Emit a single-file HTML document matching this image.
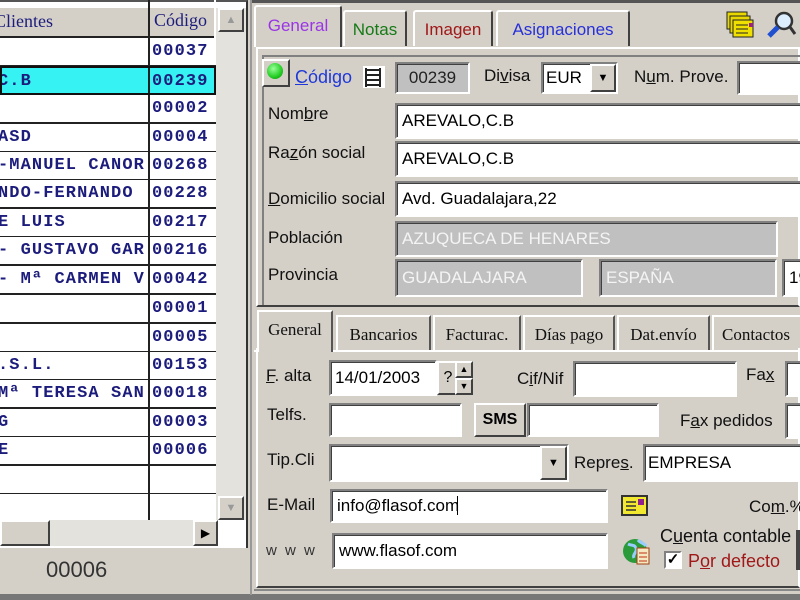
<!DOCTYPE html>
<html><head><meta charset="utf-8"><style>
*{margin:0;padding:0;box-sizing:border-box}
body{width:800px;height:600px;overflow:hidden;background:#d4d0c8;font-family:"Liberation Sans",sans-serif;position:relative}
.a{position:absolute}
.row{position:absolute;left:0;width:216px;height:29px;border-bottom:2px solid #222;background:#fff;font-family:"Liberation Mono",monospace;font-weight:bold;font-size:17px;letter-spacing:1.1px;color:#1c1c7c;white-space:nowrap;overflow:hidden}
.row .n{position:absolute;left:-2px;top:0;line-height:28px;width:148px;overflow:hidden}
.row .c{position:absolute;left:148px;width:68px;border-left:2px solid #222;padding-left:2px;height:29px;top:0;line-height:28px}
.in{position:absolute;background:#fff;border:2px solid;border-color:#808080 #fff #fff #808080;box-shadow:inset 1px 1px #404040;font-size:17px;padding-left:5px;color:#000;white-space:nowrap;overflow:hidden}
.gr{background:#c0c0c0;color:#f4f4f4}
.lb{position:absolute;font-size:17px;color:#111;white-space:nowrap}
.tab{position:absolute;border:2px solid;border-color:#fff #404040 transparent #fff;border-bottom:none;background:#d4d0c8;font-size:17px;text-align:center;border-radius:3px 3px 0 0}
.t2{position:absolute;top:315px;height:36px;border:2px solid;border-color:#fff #555 transparent #fff;border-bottom:none;font-family:"Liberation Serif",serif;font-size:17px;line-height:36px;text-align:center;color:#111}
.btn{position:absolute;background:#d4d0c8;border:2px solid;border-color:#fff #404040 #404040 #fff}
u{text-decoration:underline}
</style></head><body>
<div class="a" style="left:0;top:0;width:248px;height:548px;background:#fff;border-right:2px solid #333;border-top:2px solid #555"></div>
<div class="a" style="left:0;top:8px;width:216px;height:30px;background:#d4d0c8;border-bottom:2px solid #222;font-family:'Liberation Serif',serif;font-size:18px;color:#1c1c7c">
<span class="a" style="left:-6px;top:3px">Clientes</span>
<div class="a" style="left:148px;top:-8px;width:68px;height:38px;border-left:2px solid #222;border-right:2px solid #fff;padding:10px 0 0 4px">Código</div></div>
<div class="row" style="top:38px"><span class="n"></span><span class="c">00037</span></div>
<div class="row" style="top:66px;background:#36f2f2;border:2px solid #111"><span class="n" style="left:-4px">C.B</span><span class="c" style="background:#36f2f2;left:146px">00239</span></div>
<div class="row" style="top:95px"><span class="n"></span><span class="c">00002</span></div>
<div class="row" style="top:124px"><span class="n">ASD</span><span class="c">00004</span></div>
<div class="row" style="top:152px"><span class="n">-MANUEL CANOR</span><span class="c">00268</span></div>
<div class="row" style="top:180px"><span class="n">NDO-FERNANDO</span><span class="c">00228</span></div>
<div class="row" style="top:209px"><span class="n">E LUIS</span><span class="c">00217</span></div>
<div class="row" style="top:237px"><span class="n">- GUSTAVO GAR</span><span class="c">00216</span></div>
<div class="row" style="top:266px"><span class="n"> - Mª CARMEN V</span><span class="c">00042</span></div>
<div class="row" style="top:295px"><span class="n"></span><span class="c">00001</span></div>
<div class="row" style="top:324px"><span class="n"></span><span class="c">00005</span></div>
<div class="row" style="top:352px"><span class="n">.S.L.</span><span class="c">00153</span></div>
<div class="row" style="top:380px"><span class="n">Mª TERESA SAN</span><span class="c">00018</span></div>
<div class="row" style="top:409px"><span class="n">G</span><span class="c">00003</span></div>
<div class="row" style="top:437px"><span class="n">E</span><span class="c">00006</span></div>
<div class="row" style="top:466px"><span class="n"></span><span class="c"></span></div>
<div class="row" style="top:494px;height:26px;border-bottom:none"><span class="n"></span><span class="c"></span></div>
<div class="a" style="left:216px;top:8px;width:30px;height:512px;background:#e4e2dc"></div>
<div class="btn" style="left:218px;top:8px;width:26px;height:24px;color:#999;font-size:11px;text-align:center;line-height:20px">▲</div>
<div class="btn" style="left:218px;top:496px;width:26px;height:24px;color:#999;font-size:11px;text-align:center;line-height:20px">▼</div>
<div class="a" style="left:0;top:520px;width:218px;height:26px;background:#e4e2dc"></div>
<div class="btn" style="left:0;top:520px;width:50px;height:26px"></div>
<div class="btn" style="left:193px;top:520px;width:25px;height:26px;font-size:12px;text-align:center;line-height:22px">▶</div>
<div class="a" style="left:46px;top:557px;font-size:22px;color:#333">00006</div>
<div class="a" style="left:0;top:594px;width:800px;height:6px;background:#777"></div>
<div class="a" style="left:250px;top:0;width:2px;height:595px;background:#999"></div>

<div class="a" style="left:252px;top:0;width:548px;height:3px;background:#555"></div>
<div class="tab" style="left:254px;top:5px;width:88px;height:42px;line-height:38px;color:#9a34e6;z-index:2">General</div>
<div class="tab" style="left:343px;top:10px;width:64px;height:36px;line-height:36px;color:#167a16">Notas</div>
<div class="tab" style="left:413px;top:10px;width:80px;height:36px;line-height:36px;color:#a01818">Imagen</div>
<div class="tab" style="left:496px;top:10px;width:134px;height:36px;line-height:36px;color:#2830d8">Asignaciones</div>
<svg class="a" style="left:725px;top:10px" width="30" height="30"><rect x="2" y="2" width="20" height="17" fill="#e8d800" stroke="#222"/><rect x="5" y="6" width="20" height="17" fill="#e8d800" stroke="#222"/><rect x="8" y="10" width="20" height="17" fill="#f0e000" stroke="#222"/><path d="M11 15h12M11 19h12M11 23h12" stroke="#222"/><rect x="24" y="13" width="4" height="4" fill="#a02080"/></svg>
<svg class="a" style="left:765px;top:8px" width="32" height="32"><circle cx="19" cy="13" r="8" fill="#ddeeff" stroke="#333" stroke-width="2.5"/><path d="M13 19L4 28" stroke="#2050d0" stroke-width="5"/><path d="M25 19l5 7" stroke="#333" stroke-width="3"/></svg>
<div class="a" style="left:256px;top:47px;width:544px;height:260px;border:2px solid;border-color:#fff #fff #404040 #fff"></div>
<div class="a" style="left:262px;top:55px;width:540px;height:250px;border-left:2px solid #808080;border-top:2px solid #808080"></div>

<div class="btn" style="left:262px;top:59px;width:28px;height:28px"><div class="a" style="left:3px;top:2px;width:16px;height:16px;border-radius:50%;background:radial-gradient(circle at 40% 35%,#9f9,#2c2 60%,#080)"></div></div>
<div class="lb" style="left:295px;top:67px;color:#2038d8;font-size:18px"><u>C</u>ódigo</div>
<svg class="a" style="left:361px;top:64px" width="26" height="26"><rect x="2" y="2" width="22" height="22" fill="#fff"/><path d="M4 6h16M4 11h16M4 16h16M4 21h16M5 4v19M19 4v19" stroke="#222" stroke-width="2" fill="none"/></svg>
<div class="in gr" style="left:395px;top:62px;width:75px;height:32px;color:#222;line-height:28px;text-align:center;padding:0">00239</div>
<div class="lb" style="left:484px;top:66px">Di<u>v</u>isa</div>
<div class="in" style="left:541px;top:62px;width:77px;height:32px;line-height:28px;padding-left:3px">EUR</div>
<div class="btn" style="left:590px;top:64px;width:26px;height:28px;font-size:11px;text-align:center;line-height:24px">▼</div>
<div class="lb" style="left:634px;top:67px">N<u>u</u>m. Prove.</div>
<div class="in" style="left:737px;top:61px;width:70px;height:34px"></div>

<div class="lb" style="left:268px;top:104px">Nom<u>b</u>re</div>
<div class="in" style="left:395px;top:103px;width:410px;height:36px;line-height:32px">AREVALO,C.B</div>
<div class="lb" style="left:268px;top:143px">Ra<u>z</u>ón social</div>
<div class="in" style="left:395px;top:141px;width:410px;height:36px;line-height:32px">AREVALO,C.B</div>
<div class="lb" style="left:268px;top:189px"><u>D</u>omicilio social</div>
<div class="in" style="left:395px;top:181px;width:410px;height:36px;line-height:32px">Avd. Guadalajara,22</div>
<div class="lb" style="left:268px;top:228px">Población</div>
<div class="in gr" style="left:395px;top:221px;width:383px;height:36px;line-height:32px">AZUQUECA DE HENARES</div>
<div class="lb" style="left:268px;top:265px">Provincia</div>
<div class="in gr" style="left:395px;top:259px;width:188px;height:38px;line-height:34px">GUADALAJARA</div>
<div class="in gr" style="left:599px;top:259px;width:178px;height:38px;line-height:34px">ESPAÑA</div>
<div class="in" style="left:782px;top:259px;width:30px;height:38px;line-height:34px">19</div>

<div class="a" style="left:256px;top:348px;width:544px;height:240px;border:2px solid;border-color:#fff #fff #404040 #fff;border-top:none"></div>
<div class="a" style="left:254px;top:589px;width:546px;height:2px;background:#888"></div>
<div class="t2" style="left:257px;top:310px;width:76px;height:42px;background:#d4d0c8;z-index:2">General</div>
<div class="t2" style="left:336px;width:95px">Bancarios</div>
<div class="t2" style="left:433px;width:88px">Facturac.</div>
<div class="t2" style="left:523px;width:92px">Días pago</div>
<div class="t2" style="left:617px;width:93px">Dat.envío</div>
<div class="t2" style="left:712px;width:100px;text-align:left;padding-left:8px">Contactos</div>
<div class="a" style="left:254px;top:350px;width:546px;height:2px;background:#fff"></div>

<div class="lb" style="left:266px;top:366px"><u>F</u>. alta</div>
<div class="in" style="left:329px;top:360px;width:108px;height:36px;line-height:32px;padding-left:4px">14/01/2003</div>
<div class="btn" style="left:437px;top:361px;width:20px;height:34px;font-size:16px;line-height:30px;text-align:center;border-right:none">?</div>
<div class="btn" style="left:455px;top:361px;width:18px;height:17px;font-size:9px;text-align:center;line-height:13px">▲</div>
<div class="btn" style="left:455px;top:378px;width:18px;height:17px;font-size:9px;text-align:center;line-height:13px">▼</div>
<div class="lb" style="left:517px;top:369px">C<u>i</u>f/Nif</div>
<div class="in" style="left:573px;top:361px;width:164px;height:36px"></div>
<div class="lb" style="left:746px;top:365px">Fa<u>x</u></div>
<div class="in" style="left:785px;top:361px;width:30px;height:36px"></div>

<div class="lb" style="left:267px;top:405px">Telfs.</div>
<div class="in" style="left:329px;top:403px;width:133px;height:34px"></div>
<div class="btn" style="left:474px;top:403px;width:52px;height:34px;font-weight:bold;font-size:16px;text-align:center;line-height:30px">SMS</div>
<div class="in" style="left:527px;top:403px;width:132px;height:34px"></div>
<div class="lb" style="left:680px;top:411px">F<u>a</u>x pedidos</div>
<div class="in" style="left:785px;top:403px;width:30px;height:36px"></div>

<div class="lb" style="left:267px;top:450px">Tip.Cli</div>
<div class="in" style="left:329px;top:444px;width:240px;height:38px"></div>
<div class="btn" style="left:540px;top:446px;width:27px;height:34px;font-size:11px;text-align:center;line-height:30px">▼</div>
<div class="lb" style="left:574px;top:453px">Repre<u>s</u>.</div>
<div class="in" style="left:643px;top:444px;width:170px;height:38px;line-height:34px;padding-left:3px">EMPRESA</div>

<div class="lb" style="left:267px;top:495px">E-Mail</div>
<div class="in" style="left:330px;top:489px;width:278px;height:34px;line-height:30px">info@flasof.com<span style="border-left:1px solid #000;margin-left:-2px"></span></div>
<svg class="a" style="left:621px;top:495px" width="28" height="22"><rect x="1" y="1" width="25" height="19" fill="#f2e830" stroke="#333" stroke-width="2"/><path d="M5 7h10M5 11h10M5 15h10" stroke="#333" stroke-width="1.5"/><rect x="17" y="4" width="6" height="6" fill="#902090"/></svg>
<div class="lb" style="left:749px;top:497px">Co<u>m</u>.%</div>

<div class="lb" style="left:266px;top:542px;font-size:15px;color:#333;letter-spacing:2px">w w w</div>
<div class="in" style="left:332px;top:533px;width:276px;height:36px;line-height:32px">www.flasof.com</div>
<svg class="a" style="left:622px;top:536px" width="30" height="30"><circle cx="13" cy="15" r="12" fill="#2a9a3a"/><path d="M6 8c4 2 6 0 8 4s-4 6-2 10M16 4c2 3 6 3 8 6" stroke="#9cf" stroke-width="3" fill="none"/><rect x="15" y="12" width="12" height="16" fill="#f6e8c0" stroke="#a04010"/><path d="M17 17h8M17 21h8M17 25h8" stroke="#c03010"/></svg>
<div class="lb" style="left:660px;top:526px;font-size:18px">C<u>u</u>enta contable</div>
<div class="a" style="left:664px;top:551px;width:18px;height:18px;background:#fff;border:2px solid;border-color:#808080 #fff #fff #808080;font-size:15px;line-height:14px;text-align:center;font-weight:bold">✓</div>
<div class="lb" style="left:688px;top:551px;color:#a01818;font-size:18px">P<u>o</u>r defecto</div>
<div class="a" style="left:796px;top:530px;width:4px;height:40px;background:#444"></div>
</body></html>
